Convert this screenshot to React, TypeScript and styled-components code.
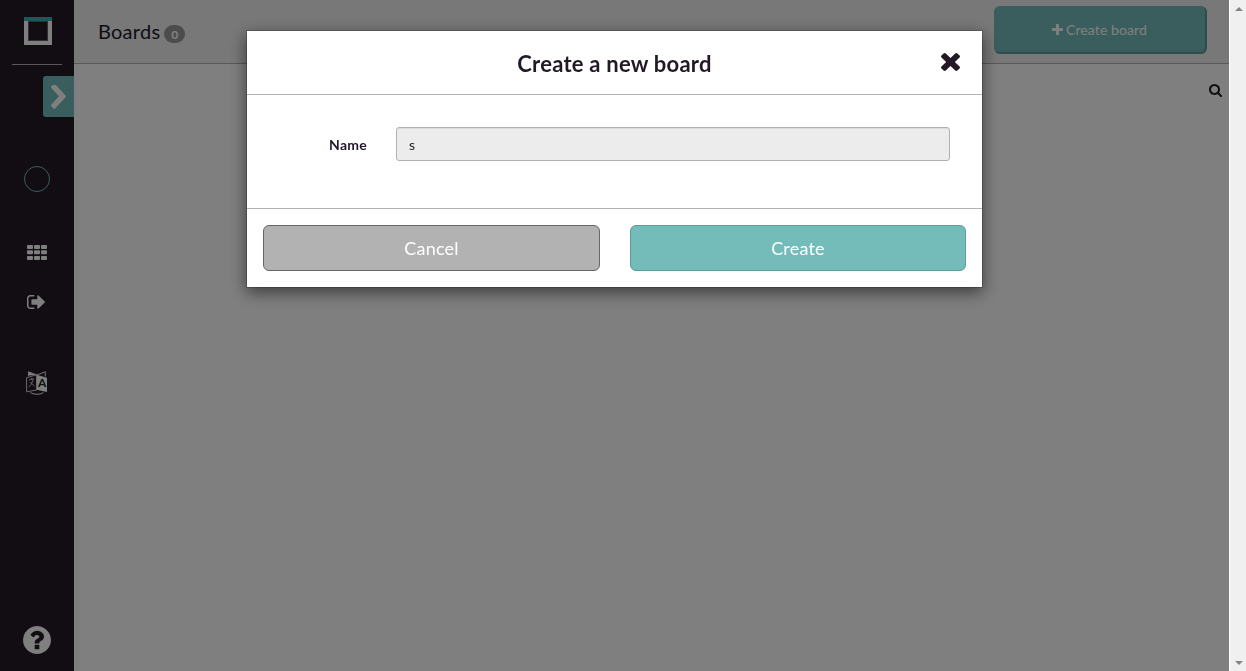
import React from "react";
import styled, { createGlobalStyle } from "styled-components";

const Global = createGlobalStyle`
  * { box-sizing: border-box; }
  body { margin: 0; overflow: hidden; font-family: Lato, "Liberation Sans", sans-serif; font-size: 14px; color: #231926; }
  button, input { font-family: inherit; }
`;

const Screen = styled.div`
  display: flex;
  height: 100vh;
  background: #fff;
`;

const Sidebar = styled.aside`
  width: 74px;
  display: flex;
  flex-direction: column;
  align-items: center;
  background: #251b27;
  color: #fff;
  padding: 17px 0 16px;
`;

const Logo = styled.div`
  width: 28px;
  height: 28px;
  margin-left: 2px;
  border: 4px solid #fff;
  border-image: linear-gradient(#38b3b1 4px, #fff 4px) 4;
  box-shadow: inset 0 0 0 1px #665f68;
`;

const Divider = styled.div`
  width: 50px;
  height: 1px;
  margin-top: 19px;
  background: #b2b2b2;
`;

const Expand = styled.button`
  align-self: flex-end;
  width: 31px;
  height: 41px;
  margin-top: 11px;
  padding: 0 0 0 8px;
  display: flex;
  align-items: center;
  border: 0;
  border-radius: 3px 0 0 3px;
  background: #73bcba;
  color: #fff;
`;

const Avatar = styled.div`
  width: 26px;
  height: 26px;
  margin-top: 49px;
  border: 1px solid #73bcba;
  border-radius: 50%;
`;

const NavItem = styled.div<{ $gap: number; $height: number; $end?: number }>`
  height: ${(p) => p.$height}px;
  margin: ${(p) => p.$gap}px ${(p) => p.$end ?? 0}px 0 0;
  display: flex;
  justify-content: center;
`;

const Help = styled.div`
  margin: auto 1px 0 0;
  height: 29px;
`;

const Main = styled.main`
  flex: 1;
  display: flex;
  flex-direction: column;
`;

const TopBar = styled.header`
  height: 64px;
  display: flex;
  justify-content: space-between;
  border-bottom: 1px solid #b2b2b2;
  background: #f0f0f0;
  padding: 6px 22px 0 24px;
`;

const Heading = styled.h1`
  display: flex;
  align-items: center;
  height: 50px;
  margin: 0;
  font-size: 20px;
  font-weight: 400;
  letter-spacing: 0.25px;
`;

const Badge = styled.span`
  height: 18px;
  margin: 6px 0 0 4px;
  padding: 2px 7px;
  border-radius: 10px;
  background: #999;
  color: #fff;
  font-size: 13px;
  font-weight: 700;
  font-variant-numeric: oldstyle-nums;
  letter-spacing: 0;
  line-height: 14px;
`;

const CreateBoard = styled.button`
  width: 213px;
  height: 48px;
  display: flex;
  align-items: center;
  justify-content: center;
  gap: 3px;
  padding: 0 2px 2px 0;
  border: 1px solid #73bcba;
  border-right-color: #5e9a98;
  border-bottom-color: #5e9a98;
  border-radius: 6px;
  background: #73bcba;
  box-shadow: inset -1px -1px 0 #5e9a98;
  color: #fff;
  font-size: 14px;
  letter-spacing: 0.1px;
`;

const SearchRow = styled.div`
  display: flex;
  justify-content: flex-end;
  padding: 20px 7px 0 0;
`;

const ScrollTrack = styled.div`
  width: 17px;
  display: flex;
  flex-direction: column;
  justify-content: space-between;
  align-items: center;
  padding: 7px 0 6px 1px;
  border-left: 1px solid #fff;
  background: #f0f0f0;
`;

const Backdrop = styled.div`
  position: fixed;
  inset: 0 17px 0 0;
  display: flex;
  justify-content: center;
  align-items: flex-start;
  padding: 30px 0 0 0;
  background: rgba(0, 0, 0, 0.5);
`;

const Dialog = styled.section`
  width: 737px;
  border: 1px solid rgba(0, 0, 0, 0.2);
  background: #fff;
  background-clip: padding-box;
  box-shadow: 0 5px 15px rgba(0, 0, 0, 0.5);
`;

const DialogHeader = styled.header`
  display: grid;
  grid-template-columns: 32px 1fr 32px;
  align-items: center;
  height: 64px;
  padding: 0 16px;
  border-bottom: 1px solid #b2b2b2;
`;

const DialogTitle = styled.h2`
  grid-column: 2;
  margin: 0;
  padding-top: 1px;
  text-align: center;
  font-size: 22px;
  font-weight: 700;
  letter-spacing: 0.24px;
`;

const Close = styled.button`
  display: flex;
  justify-content: center;
  padding: 0 0 1px;
  border: 0;
  background: none;
  color: inherit;
`;

const DialogBody = styled.div`
  display: flex;
  align-items: flex-start;
  height: 113px;
  padding: 32px 32px 0 15px;
`;

const Label = styled.label`
  width: 134px;
  padding: 9px 29px 0 0;
  text-align: right;
  flex: none;
  line-height: 17px;
  font-weight: 700;
  letter-spacing: 0.25px;
`;

const NameInput = styled.input`
  flex: 1;
  min-width: 0;
  height: 34px;
  padding: 6px 12px;
  border: 1px solid #b2b2b2;
  border-radius: 3px;
  background: #ececec;
  box-shadow: inset 0 1px 1px rgba(0, 0, 0, 0.075);
  color: #231926;
  font-size: 14px;
  outline: none;
`;

const DialogFooter = styled.footer`
  display: grid;
  grid-template-columns: 337px 336px;
  column-gap: 30px;
  height: 79px;
  padding: 16px;
  border-top: 1px solid #b2b2b2;
`;

const Action = styled.button<{ $primary?: boolean }>`
  height: 46px;
  padding: 0;
  border: 1px solid ${(p) => (p.$primary ? "#5e9a98" : "#666")};
  border-radius: 6px;
  background: ${(p) => (p.$primary ? "#73bcba" : "#b2b2b2")};
  color: #fff;
  font-size: 18px;
  letter-spacing: 0.2px;
`;

const PATHS = {
  times:
    "M1490 1322q0 40-28 68l-136 136q-28 28-68 28t-68-28l-294-294-294 294q-28 28-68 28t-68-28l-136-136q-28-28-28-68t28-68l294-294-294-294q-28-28-28-68t28-68l136-136q28-28 68-28t68 28l294 294 294-294q28-28 68-28t68 28l136 136q28 28 28 68t-28 68l-294 294 294 294q28 28 28 68z",
  plus: "M1600 736v192q0 40-28 68t-68 28h-416v416q0 40-28 68t-68 28h-192q-40 0-68-28t-28-68v-416h-416q-40 0-68-28t-28-68v-192q0-40 28-68t68-28h416v-416q0-40 28-68t68-28h192q40 0 68 28t28 68v416h416q40 0 68 28t28 68z",
  search:
    "M1216 832q0-185-131.5-316.5t-316.5-131.5-316.5 131.5-131.5 316.5 131.5 316.5 316.5 131.5 316.5-131.5 131.5-316.5zm512 832q0 52-38 90t-90 38q-54 0-90-38l-343-342q-179 124-399 124-143 0-273.5-55.5t-225-150-150-225-55.5-273.5 55.5-273.5 150-225 225-150 273.5-55.5 273.5 55.5 225 150 150 225 55.5 273.5q0 220-124 399l343 343q37 37 37 90z",
  help: "M1024 1376v-192q0-14-9-23t-23-9h-192q-14 0-23 9t-9 23v192q0 14 9 23t23 9h192q14 0 23-9t9-23zm256-672q0-88-55.5-163t-138.5-116-170-41q-243 0-371 213-15 24 8 42l132 100q7 6 19 6 16 0 25-12 53-68 86-92 34-24 86-24 48 0 85.5 26t37.5 59q0 38-20 61t-68 45q-63 28-115.5 86.5t-52.5 125.5v36q0 14 9 23t23 9h192q14 0 23-9t9-23q0-19 21.5-49.5t54.5-49.5q32-18 49-28.5t46-35 44.5-48 28-60.5 12.5-81zm384 192q0 209-103 385.5t-279.5 279.5-385.5 103-385.5-103-279.5-279.5-103-385.5 103-385.5 279.5-279.5 385.5-103 385.5 103 279.5 279.5 103 385.5z",
  signOut:
    "M704 1440q0 4 1 20t.5 26.5-3 23.5-10 19.5-20.5 6.5h-320q-119 0-203.5-84.5t-84.5-203.5v-704q0-119 84.5-203.5t203.5-84.5h320q13 0 22.5 9.5t9.5 22.5q0 4 1 20t.5 26.5-3 23.5-10 19.5-20.5 6.5h-320q-66 0-113 47t-47 113v704q0 66 47 113t113 47h312l11.5 1 11.5 3 8 5.5 7 9 2 13.5zm928-544q0 26-19 45l-544 544q-19 19-45 19t-45-19-19-45v-288h-448q-26 0-45-19t-19-45v-384q0-26 19-45t45-19h448v-288q0-26 19-45t45-19 45 19l544 544q19 19 19 45z",
  chevron:
    "M1363 877l-742 742q-19 19-45 19t-45-19l-166-166q-19-19-19-45t19-45l531-531-531-531q-19-19-19-45t19-45l166-166q19-19 45-19t45 19l742 742q19 19 19 45t-19 45z",
};

// Each glyph's own bounds, used as its viewBox.
const BOUNDS: Record<keyof typeof PATHS, string> = {
  times: "302 366 1188 1188",
  plus: "192 128 1408 1408",
  search: "64 128 1664 1664",
  help: "128 128 1536 1536",
  signOut: "64 256 1568 1280",
  chevron: "346 108 1036 1530",
};

function Icon({ name, width, height }: { name: keyof typeof PATHS; width: number; height: number }) {
  return (
    <svg width={width} height={height} viewBox={BOUNDS[name]} preserveAspectRatio="none" fill="currentColor" aria-hidden>
      <path d={PATHS[name]} />
    </svg>
  );
}

function GridIcon() {
  return (
    <svg width="20" height="15" viewBox="0 0 20 15" fill="currentColor" aria-hidden>
      {[0, 5.2, 11].map((y) =>
        [0, 7, 14].map((x) => <rect key={`${x}-${y}`} x={x} y={y} width="6" height="4" rx="0.9" />)
      )}
    </svg>
  );
}

function LanguageIcon() {
  return (
    <svg width="22" height="24" viewBox="0 0 22 24" aria-hidden>
      <path d="M2.5 5V.8L11 4 19.3.8V5.5" fill="none" stroke="#fff" strokeWidth="0.9" />
      <path d="M2.7 1v3.6L9.8 4z" fill="#fff" />
      <path d="M.6 6.7 10.6 3.8V19L.6 20.8z" fill="none" stroke="#fff" strokeWidth="0.8" />
      <path d="M10.6 3.8 21 6.8v14.3L10.6 18.8z" fill="#fff" />
      <path d="m3 9.1 5-1.5M5.2 7l.8 1.4M7.2 8.2C6.3 12 5 14.2 2.7 16.2M4.2 11.3c1.5 1 2.9 2.3 4.2 4.2" fill="none" stroke="#fff" strokeWidth="0.7" />
      <path d="M4.3 21.5c3.5 2.3 9.3 2.4 13 .1" fill="none" stroke="#fff" strokeWidth="1" />
      <text x="11.9" y="16.2" fontFamily="Lato, sans-serif" fontSize="12" fontWeight="700" fill="#251b27">A</text>
    </svg>
  );
}

function ScrollArrow({ down = false }: { down?: boolean }) {
  return (
    <svg width="8" height="4" viewBox="0 0 8 4" aria-hidden>
      <path d={down ? "M0 0h8L4 4z" : "M0 4h8L4 0z"} fill="#858585" />
    </svg>
  );
}

export default function App() {
  return (
    <>
      <Global />
      <Screen>
        <Sidebar>
          <Logo />
          <Divider />
          <Expand aria-label="Expand menu"><Icon name="chevron" width={15} height={24} /></Expand>
          <Avatar />
          <NavItem $gap={53} $height={15}><GridIcon /></NavItem>
          <NavItem $gap={35} $height={14} $end={2}><Icon name="signOut" width={18} height={14} /></NavItem>
          <NavItem $gap={62} $height={24}><LanguageIcon /></NavItem>
          <Help><Icon name="help" width={28} height={28} /></Help>
        </Sidebar>
        <Main>
          <TopBar>
            <Heading>Boards <Badge>0</Badge></Heading>
            <CreateBoard><Icon name="plus" width={11} height={11} /> Create board</CreateBoard>
          </TopBar>
          <SearchRow><Icon name="search" width={13} height={13} /></SearchRow>
        </Main>
        <ScrollTrack><ScrollArrow /><ScrollArrow down /></ScrollTrack>
      </Screen>
      <Backdrop>
        <Dialog role="dialog">
          <DialogHeader>
            <DialogTitle>Create a new board</DialogTitle>
            <Close aria-label="Close"><Icon name="times" width={19} height={18} /></Close>
          </DialogHeader>
          <DialogBody>
            <Label htmlFor="board-name">Name</Label>
            <NameInput id="board-name" defaultValue="s" />
          </DialogBody>
          <DialogFooter>
            <Action>Cancel</Action>
            <Action $primary>Create</Action>
          </DialogFooter>
        </Dialog>
      </Backdrop>
    </>
  );
}
